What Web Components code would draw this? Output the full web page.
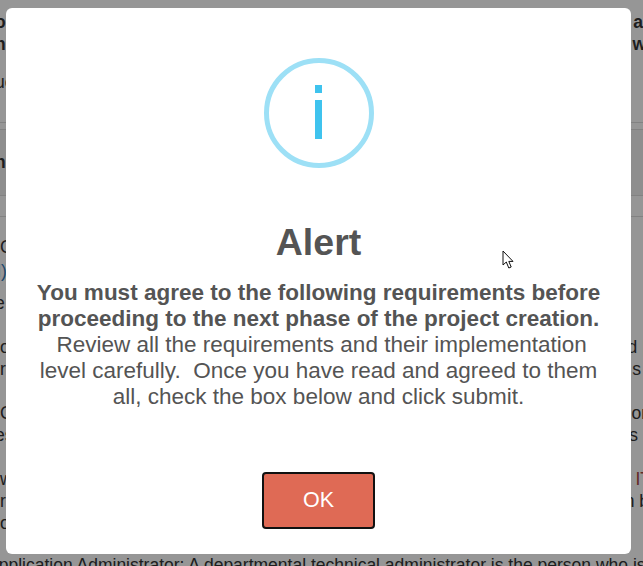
<!DOCTYPE html>
<html>
<head>
<meta charset="utf-8">
<title>Alert</title>
<style>
html, body { margin: 0; padding: 0; height: 100%; overflow: hidden; background: #fff; }
body { font-family: "Liberation Sans", Arial, sans-serif; }
</style>
</head>
<body>
<back-page></back-page>
<alert-overlay>
  <info-icon slot="icon"></info-icon>
  <span slot="title">Alert</span>
  <b>You must agree to the following requirements before proceeding to the next phase of the project creation.</b>
  &nbsp;Review all the requirements and their implementation level carefully.&nbsp; Once you have read and agreed to them all, check the box below and click submit.
</alert-overlay>
<mouse-cursor></mouse-cursor>

<script>
class BackRow extends HTMLElement{
    constructor(){
        super()
        this.attachShadow({mode: "open"}).innerHTML = `
        <style>
        :host{
            display: flex;
            justify-content: space-between;
            height: 22px;
            line-height: 22px;
            font-size: 17.5px;
            color: #333;
            white-space: nowrap;
        }
        </style>
        <slot name="left"></slot><slot name="right"></slot>`
    }
}
customElements.define("back-row", BackRow)

class BackPage extends HTMLElement{
    constructor(){
        super()
        this.attachShadow({mode: "open"}).innerHTML = `
        <style>
        :host{
            display: block;
            height: 566px;
            overflow: hidden;
            font-family: "Liberation Sans", Arial, sans-serif;
        }
        .top{ padding-top: 11px; height: 123px; box-sizing: border-box; font-weight: bold; border-bottom: 1px solid #ddd; }
        .plain{ font-weight: normal; margin-top: 16px; }
        .band{ margin-top: 6px; height: 67px; box-sizing: border-box; padding-top: 21px; background: #f2f2f2; border-top: 1px solid #ddd; border-bottom: 1px solid #ddd; font-weight: bold; }
        .body{ margin-top: 20px; border-top: 1px solid #ddd; padding-top: 19px; }
        .gap{ height: 22px; }
        .link{ color: #337ab7; }
        .last{ margin-left: -13px; width: 670px; margin-top: 20px; }
        .red{ color: #a94442; }
        .in-3{ margin-left: -3px; }
        .in-5{ margin-left: -5px; }
        </style>
        <div class="top">
            <back-row><span slot="left" class="in-5">o</span><span slot="right">a</span></back-row>
            <back-row><span slot="left" class="in-5">n</span><span slot="right" style="margin-right:-3px">w</span></back-row>
            <back-row class="plain"><span slot="left" class="in-5">ue</span></back-row>
        </div>
        <div class="band"><back-row><span slot="left" class="in-5">n</span></back-row></div>
        <div class="body">
            <back-row><span slot="left">C</span></back-row>
            <back-row style="margin-top:2px"><span slot="left" class="link in-3">l)</span></back-row>
            <back-row style="margin-top:10px"><span slot="left" class="in-5">e</span></back-row>
            <div class="gap"></div>
            <back-row><span slot="left">o</span><span slot="right" style="margin-right:-4px">d <span class="red">[</span></span></back-row>
            <back-row><span slot="left">r</span><span slot="right" style="margin-right:2px">s</span></back-row>
            <div class="gap"></div>
            <back-row><span slot="left">C</span><span slot="right" style="margin-right:-4px">or</span></back-row>
            <back-row><span slot="left" class="in-5">es</span><span slot="right" style="margin-right:5px">s</span></back-row>
            <div class="gap"></div>
            <back-row><span slot="left">w</span><span slot="right" style="margin-right:-8px"><span class="red">IT</span></span></back-row>
            <back-row><span slot="left">r</span><span slot="right" style="margin-right:-6px">n b</span></back-row>
            <back-row><span slot="left">o</span></back-row>
            <back-row class="last"><span slot="left">Application Administrator: A departmental technical administrator is the person who is</span></back-row>
        </div>`
    }
}
customElements.define("back-page", BackPage)

class InfoIcon extends HTMLElement{
    constructor(){
        super()
        this.attachShadow({mode: "open"}).innerHTML = `
        <style>
        :host{ display: block; width: 110px; height: 110px; }
        svg{ display: block; }
        </style>
        <svg width="110" height="110" viewBox="0 0 110 110">
            <circle cx="55" cy="55" r="52.5" fill="none" stroke="#9de0f6" stroke-width="5"/>
            <rect x="51" y="27" width="7" height="8" fill="#3fc3ee"/>
            <rect x="51" y="42" width="7" height="39" fill="#3fc3ee"/>
        </svg>`
    }
}
customElements.define("info-icon", InfoIcon)

class AlertOverlay extends HTMLElement{
    constructor(){
        super()
        this.attachShadow({mode: "open"}).innerHTML = `
        <style>
        :host{
            position: fixed;
            left: 0; top: 0; right: 0; bottom: 0;
            background: rgba(0,0,0,.41);
            display: block;
        }
        .modal{
            position: absolute;
            left: 6px; top: 8px;
            width: 625px; height: 546px;
            box-sizing: border-box;
            background: #fff;
            border-radius: 6px;
            padding: 50px 25px 0;
            display: flex;
            flex-direction: column;
            align-items: center;
            text-align: center;
            color: #545454;
            font-family: "Liberation Sans", Arial, sans-serif;
        }
        h2{
            margin: 49px 0 0;
            font-size: 37.5px;
            line-height: 50px;
            font-weight: bold;
        }
        .text{
            margin-top: 13px;
            font-size: 22.5px;
            line-height: 26px;
        }
        button{
            margin-top: 62px;
            width: 113px;
            height: 57px;
            box-sizing: border-box;
            background: #df6a55;
            border: 2px solid #111;
            border-radius: 4px;
            color: #fff;
            font-family: inherit;
            font-size: 21.5px;
            padding: 0 0 1px;
        }
        </style>
        <div class="modal">
            <slot name="icon"></slot>
            <h2><slot name="title"></slot></h2>
            <div class="text"><slot></slot></div>
            <button>OK</button>
        </div>`
    }
}
customElements.define("alert-overlay", AlertOverlay)

class MouseCursor extends HTMLElement{
    constructor(){
        super()
        this.attachShadow({mode: "open"}).innerHTML = `
        <style>
        :host{ position: fixed; left: 502px; top: 250px; display: block; width: 14px; height: 20px; }
        svg{ display: block; }
        </style>
        <svg width="14" height="20" viewBox="0 0 14 20">
            <path d="M1 1 L1 15 L4.3 12 L6.8 18 L9.2 17 L6.8 11.4 L11 11.4 Z" fill="#fff" stroke="#111" stroke-width="1"/>
        </svg>`
    }
}
customElements.define("mouse-cursor", MouseCursor)
</script>
</body>
</html>
